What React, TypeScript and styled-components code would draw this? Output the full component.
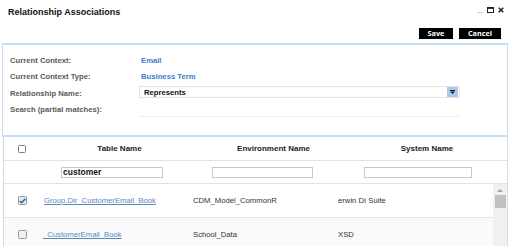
import React from "react";
import styled, { createGlobalStyle } from "styled-components";

const Global = createGlobalStyle`
  html, body { margin: 0; padding: 0; background: #fff; }
  body { font-family: "Liberation Sans", Arial, sans-serif; }
  * { box-sizing: border-box; }
`;

const Dialog = styled.div`
  width: 511px;
  height: 246px;
  overflow: hidden;
  display: flex;
  flex-direction: column;
  background: #fff;
`;

const TitleBar = styled.div`
  height: 24px;
  display: flex;
  align-items: center;
  justify-content: space-between;
  padding: 0 7px 0 8px;
`;

const Title = styled.h1`
  margin: 0;
  font-size: 9px;
  font-weight: bold;
  color: #111;
  line-height: 1;
`;

const WindowControls = styled.div`
  display: flex;
  align-items: center;
  gap: 4px;
  margin-top: -4px;
`;

const Toolbar = styled.div`
  height: 19px;
  display: flex;
  justify-content: flex-end;
  align-items: flex-start;
  gap: 6px;
  padding: 4px 10px 0 0;
`;

const BlackButton = styled.button<{ $w: number }>`
  width: ${(p) => p.$w}px;
  height: 11px;
  padding: 0;
  border: none;
  background: #000;
  color: #fff;
  font-family: "Open Sans", "Liberation Sans", sans-serif;
  font-weight: bold;
  font-size: 7.3px;
  line-height: 11px;
  cursor: pointer;
`;

const Panel = styled.section`
  margin: 0 3px 0 2px;
  height: 94px;
  border-style: solid;
  border-color: #c9def2;
  border-width: 2px 1px 2px 1px;
`;

const FormGrid = styled.div`
  display: grid;
  grid-template-columns: 129px 321px;
  grid-auto-rows: 16.5px;
  padding: 7px 0 0 7px;
`;

const Label = styled.div`
  align-self: center;
  font-size: 7.7px;
  font-weight: bold;
  color: #5a5a5a;
`;

const Value = styled.div`
  align-self: center;
  padding-left: 2px;
  font-size: 7.7px;
  font-weight: bold;
  color: #3a7dcf;
`;

const Select = styled.div`
  align-self: start;
  margin-top: 1px;
  height: 12px;
  border: 1px solid #e3e3e3;
  display: flex;
  align-items: center;
  padding-left: 4px;
  font-size: 7.7px;
  font-weight: bold;
  color: #111;
`;

const DropButton = styled.span`
  margin-left: auto;
  margin-right: 1px;
  width: 11px;
  height: 10px;
  background: #a8c8ef;
  display: flex;
  align-items: center;
  justify-content: center;
`;

const SearchBox = styled.div`
  align-self: start;
  height: 15.5px;
  border-bottom: 1px solid #eeeeee;
`;

const Table = styled.div`
  flex: 1;
  margin: 0 3px 0 3px;
  border-left: 1px solid #d9d9d9;
  border-right: 1px solid #dedede;
  display: flex;
  flex-direction: column;
  min-height: 0;
`;

const HeadRow = styled.div<{ $h: number }>`
  height: ${(p) => p.$h}px;
  display: grid;
  grid-template-columns: 36px 145px 148px 1fr;
  align-items: center;
  border-bottom: 1px solid #e2e2e2;
`;

const HeadCell = styled.div<{ $pad?: number }>`
  text-align: center;
  padding-left: ${(p) => p.$pad ?? 0}px;
  font-size: 8px;
  font-weight: bold;
  color: #222;
`;

const CenterCell = styled.div`
  display: flex;
  justify-content: center;
  align-items: center;
`;

const FilterCell = styled.div<{ $left: number }>`
  padding-left: ${(p) => p.$left}px;
  display: flex;
  align-items: center;
`;

const FilterInput = styled.div<{ $w: number }>`
  width: ${(p) => p.$w}px;
  height: 11px;
  border: 1px solid #c9c9c9;
  padding-left: 1px;
  font-size: 8.5px;
  font-weight: bold;
  color: #111;
  line-height: 9px;
`;

const Body = styled.div`
  flex: 1;
  display: flex;
  min-height: 0;
`;

const Rows = styled.div`
  flex: 1;
  display: flex;
  flex-direction: column;
`;

const Row = styled.div<{ $muted?: boolean }>`
  height: 34px;
  flex-shrink: 0;
  display: grid;
  grid-template-columns: 36px 145px 148px 1fr;
  align-items: center;
  border-bottom: 1px solid #dfe7f0;
  background: ${(p) => (p.$muted ? "#fafafa" : "#fff")};
`;

const Cell = styled.div<{ $pad: number }>`
  padding-left: ${(p) => p.$pad}px;
  font-size: 7.7px;
  color: #333;
  white-space: nowrap;
`;

const Link = styled.a`
  color: #5b86be;
  text-decoration: underline;
  font-size: 7.7px;
  cursor: pointer;
`;

const ScrollTrack = styled.div`
  width: 14px;
  background: #f0f0f0;
  display: flex;
  flex-direction: column;
  align-items: center;
  padding-top: 5px;
`;

const ScrollThumb = styled.div`
  width: 11px;
  height: 13px;
  margin-top: 3px;
  margin-left: 1px;
  background: #c1c1c1;
`;

const Box = styled.span<{ $size: number; $fill: string; $border: string }>`
  width: ${(p) => p.$size}px;
  height: ${(p) => p.$size}px;
  border: 1px solid ${(p) => p.$border};
  border-radius: 1.5px;
  background: ${(p) => p.$fill};
  display: inline-flex;
  align-items: center;
  justify-content: center;
`;

function Checkbox({ size, checked, fill = "#fff", border = "#7d7d7d" }: { size: number; checked?: boolean; fill?: string; border?: string }) {
  return (
    <Box $size={size} $fill={checked ? "#e4ebf3" : fill} $border={checked ? "#8b9bb0" : border}>
      {checked && (
        <svg width="7" height="6" viewBox="0 0 7 6">
          <path d="M0.8 3 L2.7 4.8 L6.3 0.8" fill="none" stroke="#3d5f8f" strokeWidth="1.5" />
        </svg>
      )}
    </Box>
  );
}

export default function App() {
  return (
    <>
      <Global />
      <Dialog>
        <TitleBar>
          <Title>Relationship Associations</Title>
          <WindowControls>
            <svg width="6" height="6" viewBox="0 0 6 6">
              <line x1="0" y1="5.5" x2="6" y2="5.5" stroke="#d4d4d4" strokeWidth="1" />
            </svg>
            <svg width="7" height="6" viewBox="0 0 7 6">
              <rect x="0.5" y="0.5" width="6" height="5" fill="none" stroke="#222" strokeWidth="1" />
              <line x1="0" y1="1.2" x2="7" y2="1.2" stroke="#222" strokeWidth="1.4" />
            </svg>
            <svg width="6" height="6" viewBox="0 0 6 6">
              <path d="M0.7 0.7 L5.3 5.3 M5.3 0.7 L0.7 5.3" stroke="#222" strokeWidth="1.5" />
            </svg>
          </WindowControls>
        </TitleBar>
        <Toolbar>
          <BlackButton $w={34}>Save</BlackButton>
          <BlackButton $w={42}>Cancel</BlackButton>
        </Toolbar>
        <Panel>
          <FormGrid>
            <Label>Current Context:</Label>
            <Value>Email</Value>
            <Label>Current Context Type:</Label>
            <Value>Business Term</Value>
            <Label>Relationship Name:</Label>
            <Select>
              Represents
              <DropButton>
                <svg width="5" height="4" viewBox="0 0 5 4">
                  <rect x="0" y="0" width="5" height="1" fill="#1a1a1a" />
                  <path d="M0 1.5 L5 1.5 L2.5 4 Z" fill="#1a1a1a" />
                </svg>
              </DropButton>
            </Select>
            <Label>Search (partial matches):</Label>
            <SearchBox />
          </FormGrid>
        </Panel>
        <Table>
          <HeadRow $h={24}>
            <CenterCell>
              <Checkbox size={8} />
            </CenterCell>
            <HeadCell $pad={14}>Table Name</HeadCell>
            <HeadCell $pad={29}>Environment Name</HeadCell>
            <HeadCell $pad={14}>System Name</HeadCell>
          </HeadRow>
          <HeadRow $h={23}>
            <div />
            <FilterCell $left={21}>
              <FilterInput $w={102}>customer</FilterInput>
            </FilterCell>
            <FilterCell $left={27}>
              <FilterInput $w={101} />
            </FilterCell>
            <FilterCell $left={31}>
              <FilterInput $w={108} />
            </FilterCell>
          </HeadRow>
          <Body>
            <Rows>
              <Row>
                <CenterCell>
                  <Checkbox size={9} checked />
                </CenterCell>
                <Cell $pad={4}>
                  <Link>Group.Dir_CustomerEmail_Book</Link>
                </Cell>
                <Cell $pad={8}>CDM_Model_CommonR</Cell>
                <Cell $pad={5}>erwin DI Suite</Cell>
              </Row>
              <Row $muted>
                <CenterCell>
                  <Checkbox size={9} fill="#efefef" border="#9a9a9a" />
                </CenterCell>
                <Cell $pad={3}>
                  <Link>_CustomerEmail_Book</Link>
                </Cell>
                <Cell $pad={8}>School_Data</Cell>
                <Cell $pad={5}>XSD</Cell>
              </Row>
            </Rows>
            <ScrollTrack>
              <svg width="6" height="3" viewBox="0 0 6 3">
                <path d="M0 3 L3 0 L6 3 Z" fill="#a3a3a3" />
              </svg>
              <ScrollThumb />
            </ScrollTrack>
          </Body>
        </Table>
      </Dialog>
    </>
  );
}
